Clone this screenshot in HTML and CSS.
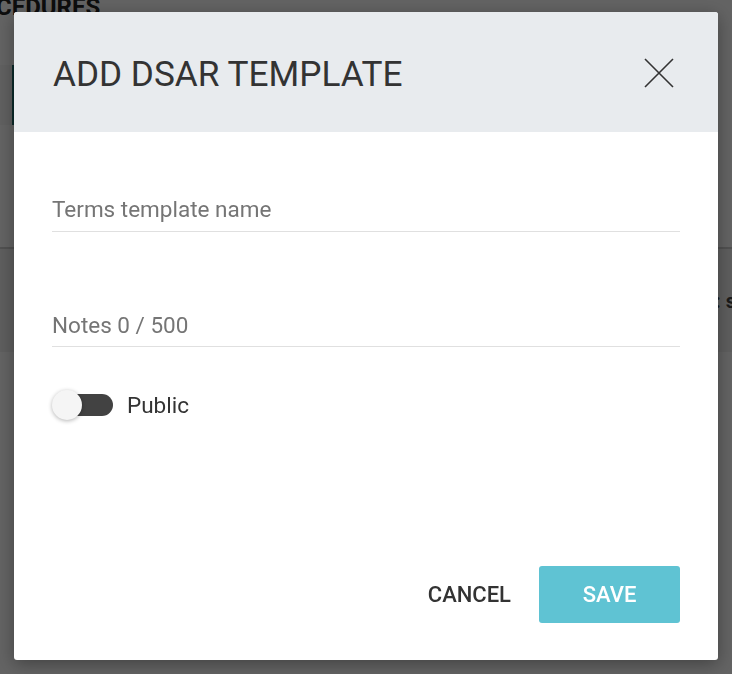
FILE: index.html
```html
<!DOCTYPE html>
<html>
<head>
<title>Add DSAR Template</title>
<meta name="viewport" content="width=732, initial-scale=1">
<link rel="stylesheet" href="styles.css">
</head>
<body>

<div class="page">
	<div class="page-title">CEDURES</div>
	<div class="page-tab"></div>
	<div class="page-gap"></div>
	<div class="page-table">
		<span class="page-cell">: s</span>
	</div>
</div>

<div class="overlay">
	<form class="dialog" id="dsar">
		<div class="dialog-head">
			<h1 class="dialog-title">ADD DSAR TEMPLATE</h1>
			<button type="button" class="close" title="Close">
				<svg width="30" height="30" viewBox="0 0 30 30">
					<path d="M1 1 L29 29 M29 1 L1 29" stroke="#333" stroke-width="1.6" fill="none"/>
				</svg>
			</button>
		</div>
		<div class="dialog-body">
			<div class="field first">
				<input class="text" name="name" type="text" placeholder="Terms template name"/>
			</div>
			<div class="field second">
				<input class="text" name="notes" type="text" placeholder="Notes 0 / 500"/>
			</div>
			<label class="switch">
				<span class="track"><span class="thumb"></span></span>
				<span class="switch-label">Public</span>
			</label>
		</div>
		<div class="dialog-foot">
			<button type="button" class="btn cancel">CANCEL</button>
			<button type="button" class="btn save">SAVE</button>
		</div>
	</form>
</div>

</body>
</html>
```

FILE: styles.css
```css
html, body {
margin:0; padding:0;
height:100%; }

body {
font-family: Roboto, "Liberation Sans", sans-serif;
background:#ffffff;
overflow:hidden; }

/* page behind the dialog */
.page {
display:flex;
flex-direction:column; }

.page-title {
height:55px;
margin-left:-4px;
margin-top:-7px;
font-size:24px;
line-height:28px;
font-weight:700;
color:#222222; }

.page-tab {
width:12px; height:60px;
margin-top:17px;
background:#f7f7f7;
border-right:2px solid #1b6d6d; }

.page-gap {
height:122px; }

.page-table {
height:103px;
border-top:2px solid #cfcfcf;
background:#f2f2f2;
display:flex;
justify-content:flex-end;
align-items:center; }

.page-cell {
font-size:20px;
font-weight:700;
color:#444444;
margin-right:-4px;
white-space:nowrap; }

/* overlay and dialog */
.overlay {
position:fixed;
inset:0;
background:rgba(0,0,0,0.61);
display:flex;
justify-content:center;
align-items:flex-start;
padding-top:12px; }

.dialog {
width:704px; height:648px;
background:#ffffff;
border-radius:3px;
box-shadow:0 4px 18px rgba(0,0,0,0.35);
display:flex;
flex-direction:column;
overflow:hidden; }

.dialog-head {
height:120px;
background:#e8ebee;
display:flex;
align-items:center;
justify-content:space-between;
padding:0 44px 0 39px;
flex-shrink:0; }

.dialog-title {
margin:0;
margin-top:4px;
font-size:35.2px;
font-weight:400;
color:#333333; }

.close {
border:0; padding:0;
background:none;
width:30px; height:30px;
margin-top:2px;
cursor:pointer; }

.close svg {
display:block; }

.dialog-body {
flex:1;
padding:0 38px;
display:flex;
flex-direction:column; }

.field {
border-bottom:1px solid #e0e0e0;
padding-bottom:9px; }

.field.first {
margin-top:64px; }

.field.second {
margin-top:80px;
padding-bottom:8px; }

.text {
display:block;
width:100%;
border:0; outline:0;
padding:0; margin:0;
height:26px;
font-family:inherit;
font-size:22.5px;
color:#333333;
background:transparent; }

.text::placeholder {
color:#757575; }

.switch {
margin-top:42px;
height:32px;
display:flex;
align-items:center;
gap:14px; }

.track {
position:relative;
width:61px; height:22px;
display:flex;
justify-content:flex-end; }

.track::before {
content:"";
width:46px; height:22px;
border-radius:11px;
background:#424242; }

.thumb {
position:absolute;
left:0; top:-4px;
width:30px; height:30px;
border-radius:50%;
background:#f5f5f5;
box-shadow:0 1px 4px rgba(0,0,0,0.3); }

.switch-label {
font-size:22.5px;
color:#333333; }

.dialog-foot {
display:flex;
justify-content:flex-end;
align-items:center;
gap:28px;
padding:0 38px 37px 0; }

.btn {
font-family:inherit;
font-size:22px;
font-weight:500;
border:0;
cursor:pointer; }

.cancel {
background:none;
padding:0;
color:#333333; }

.save {
width:141px; height:57px;
border-radius:3px;
background:#5fc3d3;
color:#ffffff; }
```
